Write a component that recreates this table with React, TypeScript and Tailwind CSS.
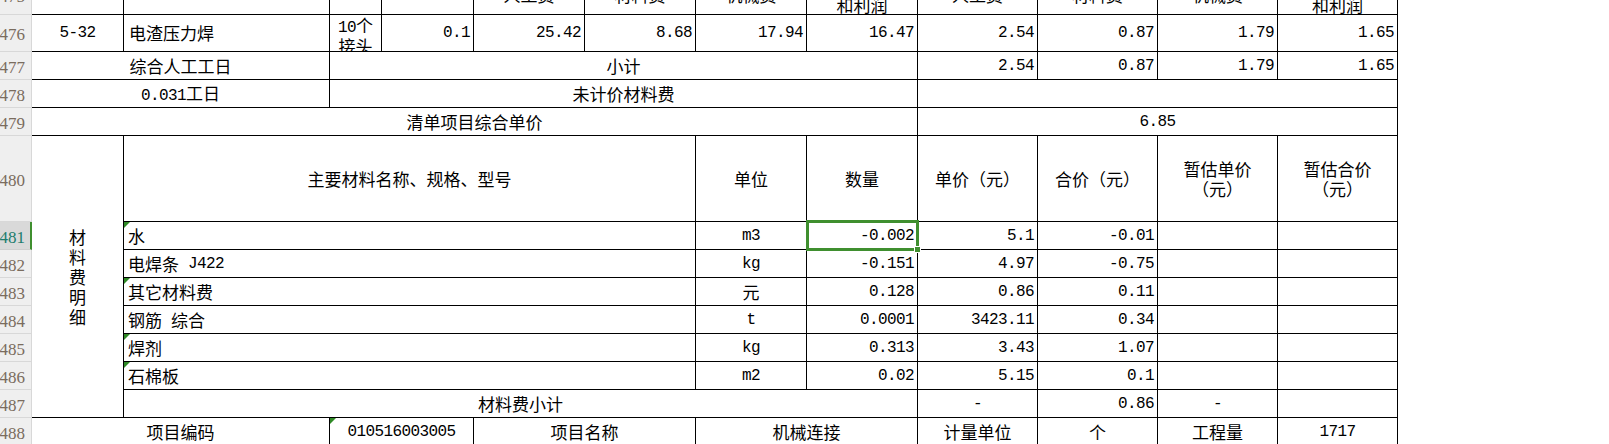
import React from "react";

const N = ({ children }: { children: React.ReactNode }) => (
  <span className="font-['Liberation_Mono',monospace] text-[16px] leading-none tracking-[-0.6px]">{children}</span>
);

const CEN = "relative flex items-center justify-center text-center overflow-hidden border-b border-r border-black";
const LEFT = "relative flex items-center justify-start pl-[4px] overflow-hidden border-b border-r border-black whitespace-nowrap";
const RIGHT = "relative flex items-center justify-end pr-[3px] overflow-hidden border-b border-r border-black whitespace-nowrap";

const Mark = () => (
  <span className="absolute left-0 top-0 h-0 w-0 border-t-[6px] border-r-[6px] border-t-[#2f8a26] border-r-transparent" />
);

const RowHead = ({ n, sel }: { n: number; sel?: boolean }) =>
  sel ? (
    <div className="flex items-center justify-end pr-[5px] pt-[3px] bg-[#d9d9d9] border-b border-b-[#cfcfcf] border-r-2 border-r-[#3f8f2f] text-[#1d7d6d]">
      <span className="font-['Liberation_Serif',serif] text-[17px] leading-none">{n}</span>
    </div>
  ) : (
    <div className="flex items-center justify-end pr-[6px] pt-[3px] bg-[#efefef] border-b border-r border-[#d8d8d8] text-[#7a6c5e]">
      <span className="font-['Liberation_Serif',serif] text-[17px] leading-none">{n}</span>
    </div>
  );

type Mat = {
  n: number;
  name: React.ReactNode;
  u: React.ReactNode;
  q: string;
  p: string;
  t: string;
  mark?: boolean;
  sel?: boolean;
};

const mats: Mat[] = [
  { n: 481, name: "水", u: <N>m3</N>, q: "-0.002", p: "5.1", t: "-0.01", mark: true, sel: true },
  { n: 482, name: <>电焊条<N>{"\u00a0J422"}</N></>, u: <N>kg</N>, q: "-0.151", p: "4.97", t: "-0.75" },
  { n: 483, name: "其它材料费", u: "元", q: "0.128", p: "0.86", t: "0.11", mark: true },
  { n: 484, name: <>钢筋<N>{"\u00a0"}</N>综合</>, u: <N>t</N>, q: "0.0001", p: "3423.11", t: "0.34" },
  { n: 485, name: "焊剂", u: <N>kg</N>, q: "0.313", p: "3.43", t: "1.07", mark: true },
  { n: 486, name: "石棉板", u: <N>m2</N>, q: "0.02", p: "5.15", t: "0.1", mark: true },
];

export default function App() {
  return (
    <div className="w-[1609px] h-[444px] overflow-hidden bg-white">
      <div className="grid w-[1398px] grid-cols-[32px_92px_206px_52px_92px_111px_111px_111px_111px_120px_120px_120px_120px] grid-rows-[15px_37px_28px_28px_28px_86px_28px_28px_28px_28px_28px_28px_28px_28px] font-['Noto_Sans_CJK_SC',sans-serif] text-[17px] leading-[20px] text-black">
        {/* Row 475 (cut off) */}
        <div className="flex items-start justify-end pr-[6px] overflow-hidden bg-[#efefef] border-b border-r border-[#d8d8d8] text-[#7a6c5e]">
          <span className="-mt-[12px] font-['Liberation_Serif',serif] text-[17px] leading-none">475</span>
        </div>
        <div className="border-b border-r border-black" />
        <div className="border-b border-r border-black" />
        <div className="border-b border-r border-black" />
        <div className="border-b border-r border-black" />
        <div className="flex justify-center overflow-hidden border-b border-r border-black"><div className="-mt-[15px]">人工费</div></div>
        <div className="flex justify-center overflow-hidden border-b border-r border-black"><div className="-mt-[15px]">材料费</div></div>
        <div className="flex justify-center overflow-hidden border-b border-r border-black"><div className="-mt-[15px]">机械费</div></div>
        <div className="flex justify-center overflow-hidden border-b border-r border-black"><div className="-mt-[25px] text-center">管理费<br />和利润</div></div>
        <div className="flex justify-center overflow-hidden border-b border-r border-black"><div className="-mt-[15px]">人工费</div></div>
        <div className="flex justify-center overflow-hidden border-b border-r border-black"><div className="-mt-[15px]">材料费</div></div>
        <div className="flex justify-center overflow-hidden border-b border-r border-black"><div className="-mt-[15px]">机械费</div></div>
        <div className="flex justify-center overflow-hidden border-b border-r border-black"><div className="-mt-[25px] text-center">管理费<br />和利润</div></div>

        {/* Row 476 */}
        <RowHead n={476} />
        <div className={CEN}><N>5-32</N></div>
        <div className={LEFT + " pl-[5px]"}>电渣压力焊</div>
        <div className="flex items-start justify-center text-center overflow-hidden border-b border-r border-black"><div><N>10</N>个<br />接头</div></div>
        <div className={RIGHT}><N>0.1</N></div>
        <div className={RIGHT}><N>25.42</N></div>
        <div className={RIGHT}><N>8.68</N></div>
        <div className={RIGHT}><N>17.94</N></div>
        <div className={RIGHT}><N>16.47</N></div>
        <div className={RIGHT}><N>2.54</N></div>
        <div className={RIGHT}><N>0.87</N></div>
        <div className={RIGHT}><N>1.79</N></div>
        <div className={RIGHT}><N>1.65</N></div>

        {/* Row 477 */}
        <RowHead n={477} />
        <div className={CEN + " col-span-2"}>综合人工工日</div>
        <div className={CEN + " col-span-6"}>小计</div>
        <div className={RIGHT}><N>2.54</N></div>
        <div className={RIGHT}><N>0.87</N></div>
        <div className={RIGHT}><N>1.79</N></div>
        <div className={RIGHT}><N>1.65</N></div>

        {/* Row 478 */}
        <RowHead n={478} />
        <div className={CEN + " col-span-2"}><span><N>0.031</N>工日</span></div>
        <div className={CEN + " col-span-6"}>未计价材料费</div>
        <div className={CEN + " col-span-4"} />

        {/* Row 479 */}
        <RowHead n={479} />
        <div className={CEN + " col-span-8"}>清单项目综合单价</div>
        <div className={CEN + " col-span-4"}><N>6.85</N></div>

        {/* Row 480 */}
        <RowHead n={480} />
        <div className={CEN + " row-span-8"}>
          <div className="flex flex-col items-center">
            <span>材</span>
            <span>料</span>
            <span>费</span>
            <span>明</span>
            <span>细</span>
          </div>
        </div>
        <div className={CEN + " col-span-5"}>主要材料名称、规格、型号</div>
        <div className={CEN}>单位</div>
        <div className={CEN}>数量</div>
        <div className={CEN}>单价（元）</div>
        <div className={CEN}>合价（元）</div>
        <div className={CEN}><div>暂估单价<br />（元）</div></div>
        <div className={CEN}><div>暂估合价<br />（元）</div></div>

        {mats.map((m) => (
          <React.Fragment key={m.n}>
            <RowHead n={m.n} sel={m.sel} />
            <div className={LEFT + " col-span-5"}>
              {m.mark && <Mark />}
              {m.name}
            </div>
            <div className={CEN}>{m.u}</div>
            {m.sel ? (
              <div className="relative flex items-center justify-end pr-[3px] border-b border-r border-black whitespace-nowrap">
                <N>{m.q}</N>
                <div className="absolute -left-[1px] -top-[2px] z-10 h-[31px] w-[113px] border-[3px] border-[#3f8f2f]" />
                <div className="absolute left-[107px] top-[24px] z-20 h-[7px] w-[7px] border border-white bg-[#3f8f2f]" />
              </div>
            ) : (
              <div className={RIGHT}><N>{m.q}</N></div>
            )}
            <div className={RIGHT}><N>{m.p}</N></div>
            <div className={RIGHT}><N>{m.t}</N></div>
            <div className={CEN} />
            <div className={CEN} />
          </React.Fragment>
        ))}

        {/* Row 487 */}
        <RowHead n={487} />
        <div className={CEN + " col-span-7"}>材料费小计</div>
        <div className={CEN}><N>-</N></div>
        <div className={RIGHT}><N>0.86</N></div>
        <div className={CEN}><N>-</N></div>
        <div className={CEN} />

        {/* Row 488 */}
        <RowHead n={488} />
        <div className={CEN + " col-span-2"}>项目编码</div>
        <div className={CEN + " col-span-2"}><Mark /><N>010516003005</N></div>
        <div className={CEN + " col-span-2"}>项目名称</div>
        <div className={CEN + " col-span-2"}>机械连接</div>
        <div className={CEN}>计量单位</div>
        <div className={CEN}>个</div>
        <div className={CEN}>工程量</div>
        <div className={CEN}><N>1717</N></div>
      </div>
    </div>
  );
}
